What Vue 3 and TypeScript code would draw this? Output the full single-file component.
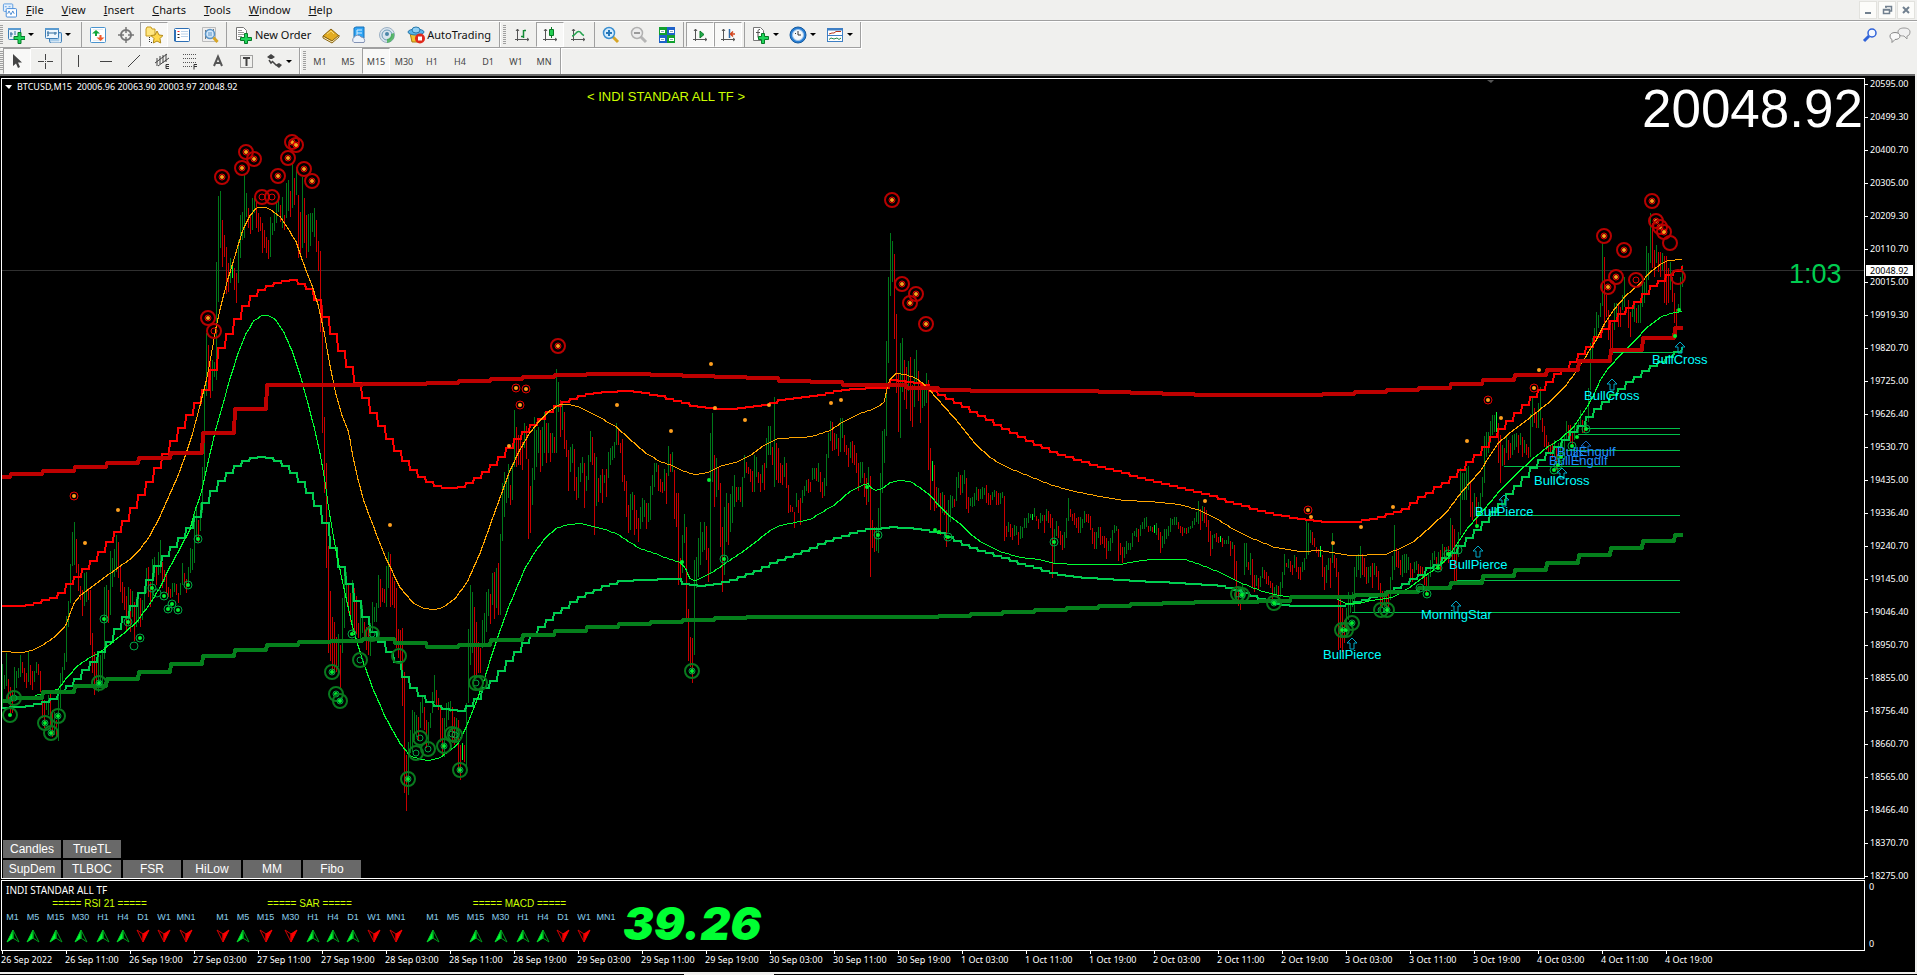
<script setup lang="ts">
type Pt = [number, number]

interface Tool {
  icon: string
  name: string
  text?: string
  caret?: boolean
  active?: boolean
}

const menus = ['File', 'View', 'Insert', 'Charts', 'Tools', 'Window', 'Help']

const standardTools: Tool[][] = [
  [
    { icon: 'new-chart', name: 'New chart', caret: true },
    { icon: 'profiles', name: 'Profiles', caret: true },
  ],
  [
    { icon: 'market', name: 'Market watch' },
    { icon: 'data', name: 'Data window' },
    { icon: 'navigator', name: 'Navigator', active: true },
    { icon: 'terminal', name: 'Terminal' },
    { icon: 'tester', name: 'Strategy tester' },
  ],
  [
    { icon: 'order', name: 'New Order', text: 'New Order' },
    { icon: 'editor', name: 'Editor' },
    { icon: 'cloud', name: 'Hosting' },
    { icon: 'signal', name: 'Signals' },
    { icon: 'auto', name: 'AutoTrading', text: 'AutoTrading' },
  ],
]

const chartTools: Tool[][] = [
  [
    { icon: 'bars', name: 'Bar chart' },
    { icon: 'candles', name: 'Candlesticks', active: true },
    { icon: 'line', name: 'Line chart' },
  ],
  [
    { icon: 'zoom-in', name: 'Zoom in' },
    { icon: 'zoom-out', name: 'Zoom out' },
    { icon: 'tile', name: 'Tile windows' },
  ],
  [
    { icon: 'scroll', name: 'Auto scroll', active: true },
    { icon: 'shift', name: 'Chart shift', active: true },
  ],
  [
    { icon: 'indicators', name: 'Indicators', caret: true },
    { icon: 'clock', name: 'Periods', caret: true },
    { icon: 'template', name: 'Templates', caret: true },
  ],
]

const drawTools: Tool[][] = [
  [
    { icon: 'cursor', name: 'Cursor', active: true },
    { icon: 'cross', name: 'Crosshair' },
  ],
  [
    { icon: 'vline', name: 'Vertical line' },
    { icon: 'hline', name: 'Horizontal line' },
    { icon: 'trend', name: 'Trendline' },
    { icon: 'channel', name: 'Channel' },
    { icon: 'fibo', name: 'Fibonacci' },
    { icon: 'text', name: 'Text' },
    { icon: 'label', name: 'Label' },
    { icon: 'arrows', name: 'Arrows', caret: true },
  ],
]

const periods = ['M1', 'M5', 'M15', 'M30', 'H1', 'H4', 'D1', 'W1', 'MN']

const prices = [
  '20595.00', '20499.30', '20400.70', '20305.00', '20209.30', '20110.70', '20015.00', '19919.30', '19820.70',
  '19725.00', '19626.40', '19530.70', '19435.00', '19336.40', '19240.70', '19145.00', '19046.40', '18950.70',
  '18855.00', '18756.40', '18660.70', '18565.00', '18466.40', '18370.70', '18275.00',
]

const times = Array.from({ length: 27 }, (_, i) => {
  if (i === 0) return '26 Sep 2022'
  const day = 26 + Math.floor(i / 3)
  const hour = ['03:00', '11:00', '19:00'][i % 3]
  return day > 30 ? `${day - 30} Oct ${hour}` : `${day} Sep ${hour}`
})

const quote = 'BTCUSD,M15\u00a0 20006.96 20063.90 20003.97 20048.92'

const switches = [
  ['Candles', 'TrueTL'],
  ['SupDem', 'TLBOC', 'FSR', 'HiLow', 'MM', 'Fibo'],
]

const frames = ['M1', 'M5', 'M15', 'M30', 'H1', 'H4', 'D1', 'W1', 'MN1']
const panels = [
  { name: 'RSI 21', dirs: 'uuuuuuddd' },
  { name: 'SAR', dirs: 'dudduuudd' },
  { name: 'MACD', dirs: 'u-uuuudd-' },
]

/* High-low range of every bar, two pixels apart, in window coordinates */
const barRows: [number, string][] = [
  [2, '664-707 675-689 653-686 679-703 687-713 690-713 667-695 671-688 668-678 655-677 662-673 668-682 673-688 652-682 665-685 671-690 671-682 662-673 664-675 671-692'],
  [42, '692-718 700-728 702-710 695-715 692-730 710-737 712-735 720-738 690-741 673-708 667-683 653-670 616-662 601-627 564-603 532-566 522-565 539-573 564-591 586-600'],
  [82, '590-616 573-606 572-602 588-600 590-645 633-673 652-695 660-690 657-692 655-687 651-688 587-659 585-622 590-623 551-615 558-587 549-577 535-572 542-578 566-592'],
  [122, '582-603 587-610 596-632 587-625 589-632 591-617 602-641 597-627 595-623 598-627 600-620 592-610 568-593 567-597 582-607 559-602 557-577 567-585 552-575 540-573'],
  [162, '562-588 570-582 573-593 587-597 589-598 583-597 583-592 584-595 593-603 583-595 563-585 573-585 579-593 567-586 548-573 549-570 514-563 508-539 520-542 503-531'],
  [202, '467-513 388-480 333-396 345-388 358-398 360-391 362-377 262-380 196-302 191-248 220-267 235-257 247-294 263-292 258-283 263-278 268-290 273-303 240-283 215-258'],
  [242, '212-240 175-238 193-217 208-228 215-234 198-230 198-213 202-228 213-232 217-231 223-253 230-248 237-253 240-259 217-257 223-235 212-231 202-223 199-212 205-222'],
  [282, '197-228 215-230 183-218 180-211 191-217 163-208 178-205 167-195 195-258 212-255 177-248 198-243 215-258 214-252 213-246 213-232 208-237 220-252 241-271 251-332'],
  [322, '305-433 417-493 463-568 546-653 591-661 617-672 622-673 637-672 634-667 645-690 598-653 567-628 572-603 585-613 593-622 580-633 588-633 596-634 623-638 607-642'],
  [362, '605-633 622-640 627-650 626-655 623-656 602-633 607-622 603-622 575-608 579-607 588-602 589-603 566-607 552-588 554-607 577-605 581-608 588-648 629-658 630-668'],
  [402, '628-706 672-793 755-811 742-795 730-753 710-752 712-740 715-737 717-740 702-728 695-713 707-730 720-748 722-745 713-728 692-713 675-703 690-707 698-710 705-742'],
  [442, '718-757 718-757 703-727 702-720 701-712 707-743 717-745 718-743 720-772 745-780 743-760 745-762 703-772 629-703 585-665 592-653 607-678 622-677 642-673 648-673'],
  [482, '620-648 613-645 592-632 589-616 594-624 573-605 572-619 568-608 563-615 534-615 483-541 472-517 479-503 464-498 485-505 463-500 410-467 427-467 435-465 437-465'],
  [522, '442-470 423-448 426-459 459-539 486-533 468-505 417-480 430-467 427-453 430-472 427-466 412-453 423-463 423-453 433-462 433-453 437-453 369-453 382-412 400-437'],
  [562, '402-430 412-449 440-457 450-491 447-472 444-463 449-491 477-500 467-498 463-482 457-473 463-508 476-491 455-480 431-462 437-465 453-535 457-506 478-502 475-493'],
  [602, '469-503 475-483 469-497 452-478 448-465 446-460 442-458 423-445 430-445 443-453 439-482 475-491 481-517 505-533 494-530 492-510 495-535 510-529 518-542 507-529'],
  [642, '498-522 500-517 503-529 503-522 486-520 475-495 463-487 463-472 465-491 479-492 482-493 469-491 473-504 446-476 454-472 452-472 470-519 493-527 493-585 558-578'],
  [682, '535-573 514-543 527-618 609-661 637-667 638-683 560-655 557-588 538-577 522-565 532-552 522-550 526-560 548-582 433-573 413-482 455-507 458-497 467-490 483-547'],
  [722, '527-592 507-575 493-542 503-545 494-532 486-523 475-507 487-502 487-500 487-502 477-507 455-478 462-473 467-474 469-482 471-492 455-492 457-477 472-483 474-492'],
  [762, '465-483 463-490 438-468 426-455 426-455 447-465 397-487 443-480 448-483 463-483 465-485 457-477 463-488 485-513 505-512 507-512 512-528 493-507 500-513 498-525'],
  [802, '490-503 486-496 480-491 479-493 482-492 468-480 468-479 468-481 463-482 472-492 482-498 478-496 454-486 433-458 421-441 422-451 433-450 434-449 438-456 418-452'],
  [842, '418-438 435-452 445-455 448-467 442-458 441-463 445-465 453-473 463-491 462-483 462-478 473-497 478-505 467-502 476-577 520-548 527-552 527-551 508-553 473-528'],
  [882, '431-493 429-463 341-436 277-363 233-296 241-282 254-339 314-393 373-432 343-438 338-392 360-400 367-409 361-391 357-421 385-427 359-407 350-382 371-401 383-423'],
  [922, '387-408 385-406 373-403 380-470 448-510 461-481 465-511 487-508 488-507 493-535 492-513 495-515 510-547 500-532 495-522 496-508 499-507 477-501 472-488 475-495'],
  [962, '475-493 470-484 478-509 497-513 498-506 497-507 493-506 487-500 489-501 489-499 487-499 488-495 485-503 493-505 495-505 492-500 490-497 491-505 493-505 493-504'],
  [1002, '492-498 496-541 526-537 522-532 524-537 528-540 525-536 526-535 532-545 526-539 527-538 518-528 518-528 513-523 514-518 514-520 508-517 516-521 519-529 513-523'],
  [1042, '515-521 515-533 509-521 511-523 514-528 518-578 529-563 521-536 526-538 531-545 535-550 532-548 518-538 498-521 509-517 514-521 513-525 518-528 517-533 517-533'],
  [1082, '519-528 511-523 514-522 514-523 516-530 528-544 532-549 532-549 527-538 527-545 536-544 536-548 538-559 541-551 538-551 530-543 525-533 526-531 529-561 543-555'],
  [1122, '547-563 547-558 541-554 543-550 543-550 533-547 531-536 528-537 529-542 525-536 522-529 518-529 517-527 526-532 526-531 527-532 525-533 523-535 528-540 532-553'],
  [1162, '536-548 529-544 529-539 526-536 518-532 519-525 517-525 517-525 522-529 526-533 527-536 528-533 528-534 527-533 526-529 521-528 518-525 512-522 501-524 509-530'],
  [1202, '506-521 507-523 510-527 520-542 531-556 535-549 534-538 533-542 537-543 536-542 538-547 540-544 540-544 536-544 541-556 542-549 545-580 561-604 590-606 602-610'],
  [1242, '584-603 543-575 543-567 562-570 553-575 559-587 575-592 575-586 578-590 576-587 567-578 570-579 572-584 576-585 581-588 583-603 587-597 585-595 586-597 582-597'],
  [1282, '572-588 554-575 563-567 559-568 561-572 565-575 555-568 557-572 567-579 567-580 562-572 558-570 521-559 523-555 530-543 532-545 538-547 547-553 549-557 546-557'],
  [1322, '555-577 567-590 565-583 558-570 558-588 533-563 555-568 558-577 572-650 597-648 608-652 620-643 608-637 592-620 595-613 592-607 567-613 555-577 554-570 546-578'],
  [1362, '554-575 558-577 567-584 567-583 566-577 563-588 563-575 566-577 571-590 583-607 591-607 591-607 592-610 593-613 577-600 556-580 525-570 548-567 551-568 560-575'],
  [1402, '555-577 554-573 554-573 557-570 563-578 569-582 562-573 561-570 564-575 566-575 567-577 575-585 577-593 573-588 560-577 553-567 551-560 557-568 552-567 550-570'],
  [1442, '544-563 547-563 547-557 546-563 518-557 525-560 529-585 548-583 532-557 468-535 473-500 473-500 468-500 466-490 483-517 502-520 493-517 497-528 502-515 493-513'],
  [1482, '477-497 436-483 432-457 432-453 421-443 415-435 415-432 412-432 423-463 435-483 445-466 448-465 437-453 440-460 443-458 435-455 434-450 433-447 435-453 433-445'],
  [1522, '437-457 440-453 444-455 447-458 414-457 397-427 408-423 413-428 403-428 387-420 418-432 426-447 435-450 442-452 445-455 443-458 440-457 447-470 443-463 442-458'],
  [1562, '440-457 435-453 421-440 425-438 425-443 432-447 423-440 425-433 422-433 410-427 420-433 422-433 422-428 388-422 343-390 338-362 328-343 312-337 315-328 303-317'],
  [1602, '243-306 257-327 295-317 310-340 323-350 323-352 303-330 303-317 305-327 307-327 295-310 277-307 307-313 300-328 312-337 308-317 303-322 308-323 305-323 298-323'],
  [1642, '283-307 282-303 246-295 253-280 213-263 223-268 250-277 245-263 252-272 252-277 253-270 256-303 256-305 268-303 262-290 277-302 293-323 309-337 304-313 277-310'],
  [1682, '265-287'],
]

const freshBars = [232, 462, 932, 1032, 1154, 1220, 1320, 1496]

const bars = barRows.flatMap(([start, row]) =>
  row.split(' ').map((pair, i) => {
    const [hi, lo] = pair.split('-').map(Number)
    return { x: start + i * 2, hi, lo }
  }),
)

const barPaths = { up: '', down: '', fresh: '' }
bars.forEach((bar, i) => {
  const prev = bars[Math.max(0, i - 1)]
  const falling = bar.hi + bar.lo > prev.hi + prev.lo
  const kind = freshBars.includes(bar.x) ? 'fresh' : falling ? 'down' : 'up'
  barPaths[kind] += `M${bar.x + 0.5} ${bar.hi}V${bar.lo}`
})

function parse(list: string): Pt[] {
  return list.split(' ').map((pair) => pair.split(',').map(Number) as Pt)
}

function valueAt(points: Pt[], x: number): number {
  if (x <= points[0][0]) return points[0][1]
  for (let i = 1; i < points.length; i++) {
    const [x1, y1] = points[i]
    if (x <= x1) {
      const [x0, y0] = points[i - 1]
      return y0 + ((y1 - y0) * (x - x0)) / (x1 - x0)
    }
  }
  return points[points.length - 1][1]
}

const lastBar = 1683

/* Levels of a higher period drawn as stairs that are `width` pixels wide */
function stairs(list: string, width: number, first: number): string {
  const points = parse(list)
  let y = Math.round(valueAt(points, first - width))
  let d = `M2 ${y}`
  for (let x = first; x < lastBar; x += width) {
    const next = Math.round(valueAt(points, x))
    d += `H${x}L${x + 1} ${next}`
    y = next
  }
  return `${d}H${lastBar}`
}

/* Curve that moves in one-bar steps */
function curve(list: string): string {
  const points = parse(list)
  let d = ''
  for (let x = 2; x < lastBar; x += 2) {
    d += `${d ? 'L' : 'M'}${x} ${Math.round(valueAt(points, x)) + 0.5}`
  }
  return d
}

const upperH4 = stairs(
  '-22,477 10,474 42,471 74,467 106,463 138,458 170,453 202,433 234,409 266,385 394,384 426,383 458,381 490,379 522,377 554,375 586,374 618,374 650,375 682,376 714,377 746,378 778,381 810,382 842,385 874,385 906,388 938,390 970,391 1066,391 1098,392 1130,393 1162,394 1194,395 1290,395 1322,394 1354,392 1386,390 1418,388 1450,384 1482,380 1514,375 1546,370 1578,361 1610,350 1642,338 1674,328',
  32, 10,
)
const lowerH4 = stairs(
  '-22,701 10,698 42,692 74,686 106,679 138,672 170,664 202,656 234,650 266,645 298,642 330,641 362,639 394,643 426,647 458,645 490,640 522,635 554,631 586,627 618,624 650,622 682,620 714,618 746,617 906,617 938,616 970,614 1002,612 1034,610 1066,608 1098,606 1130,604 1194,602 1258,601 1290,597 1322,597 1354,595 1386,592 1418,588 1450,583 1482,576 1514,570 1546,563 1578,555 1610,548 1642,541 1674,535',
  32, 10,
)
const upperH1 = stairs(
  '1,606 17,606 25,605 33,603 41,600 49,598 57,593 65,584 73,577 81,569 89,561 97,552 105,542 113,532 121,521 129,508 137,495 145,482 153,468 161,454 169,441 177,428 185,415 193,403 201,390 209,370 217,348 225,334 233,319 241,306 249,296 257,290 265,286 273,283 281,281 289,280 297,284 305,289 313,300 321,317 329,334 337,351 345,367 353,383 361,398 369,413 377,426 385,439 393,451 401,461 409,470 417,477 425,482 433,486 441,488 449,488 457,487 465,483 473,478 481,472 489,465 497,457 505,448 513,439 521,432 529,425 537,419 545,412 553,406 561,402 569,399 577,396 585,394 601,392 617,391 625,391 641,393 657,396 665,399 673,401 681,403 689,406 705,408 713,409 729,409 745,407 753,406 769,403 777,400 793,398 809,396 825,393 833,391 849,389 873,388 881,388 889,380 905,382 913,383 921,385 929,391 937,395 961,407 969,412 985,420 993,425 1025,441 1049,452 1073,460 1105,469 1145,480 1193,492 1209,496 1225,502 1265,513 1289,518 1305,520 1321,522 1353,522 1361,520 1377,517 1385,514 1401,509 1417,497 1425,493 1433,487 1441,483 1449,477 1457,470 1465,462 1473,455 1481,447 1489,437 1497,429 1505,421 1513,413 1521,405 1529,397 1537,390 1545,382 1553,374 1561,369 1569,362 1577,354 1585,347 1593,337 1601,329 1609,321 1617,314 1625,308 1633,302 1641,294 1649,286 1657,281 1665,275 1673,271 1681,267',
  8, 9,
)
const lowerH1 = stairs(
  '1,708 25,706 41,702 49,699 57,693 65,686 73,679 81,670 89,662 97,652 105,642 113,629 121,617 129,606 137,593 145,580 153,566 161,556 169,547 177,538 185,528 193,517 201,503 209,491 217,481 225,473 233,466 241,461 249,458 257,457 265,458 273,461 281,466 289,473 297,482 305,493 313,506 321,523 329,548 337,567 345,584 353,601 361,617 369,632 377,642 385,652 393,662 401,677 409,688 417,696 425,702 433,706 441,709 449,710 457,711 465,706 473,699 481,688 489,681 497,671 505,661 513,652 521,643 529,635 537,627 545,620 553,613 561,608 569,602 577,597 585,593 601,586 617,581 633,580 673,579 681,584 689,585 697,586 705,585 721,582 737,577 753,571 769,563 785,557 801,551 817,544 833,538 849,533 865,529 881,528 889,527 905,528 921,530 937,533 953,541 969,548 985,553 1001,558 1017,564 1033,568 1049,573 1065,576 1097,579 1153,582 1193,584 1217,586 1233,590 1249,596 1273,604 1289,606 1337,606 1353,602 1369,597 1385,592 1393,588 1401,584 1409,579 1417,575 1425,568 1433,565 1441,558 1449,553 1457,546 1465,538 1473,530 1481,522 1489,512 1497,504 1505,494 1513,486 1521,477 1529,468 1537,460 1545,453 1553,447 1561,440 1569,432 1577,426 1585,417 1593,409 1601,402 1609,395 1617,389 1625,382 1633,377 1641,371 1649,366 1657,362 1665,357 1673,352 1681,348',
  8, 9,
)
const upperM15 = curve(
  '2,651 22,652 35,649 45,643 55,636 62,629 66,624 70,613 74,603 80,595 88,589 100,580 110,573 118,567 130,559 140,549 150,535 160,516 170,493 177,478 184,459 192,435 200,405 207,377 212,350 216,327 221,305 228,278 236,252 243,229 250,215 257,207 265,207 272,210 280,216 288,228 296,241 300,253 306,270 312,285 318,304 324,331 330,365 336,394 342,415 349,433 353,457 358,479 364,501 375,530 387,560 400,587 413,602 425,608 434,609 443,607 455,598 467,582 480,553 490,525 500,497 510,470 520,449 530,432 540,420 550,410 560,404 570,404 580,407 590,412 605,420 617,427 630,439 645,452 660,461 672,465 680,469 690,473 697,474 708,472 720,466 735,462 750,455 765,444 778,438 800,437 812,436 830,430 845,420 860,413 875,408 884,402 889,380 896,373 905,374 915,377 924,384 930,390 945,407 960,424 975,443 990,457 1005,466 1020,472 1050,484 1070,490 1100,496 1125,500 1150,501 1180,504 1200,510 1215,517 1235,530 1255,539 1275,547 1300,551 1320,550 1350,555 1385,554 1400,548 1415,540 1430,527 1447,511 1462,491 1480,471 1490,455 1497,444 1510,432 1530,417 1550,401 1565,386 1577,370 1587,354 1597,338 1605,322 1615,308 1625,296 1640,283 1650,272 1660,264 1668,260 1682,259',
)
const lowerM15 = curve(
  '2,701 30,697 45,692 58,689 66,678 78,665 90,657 100,652 112,642 125,632 137,621 148,606 160,587 168,570 180,548 190,529 195,510 201,493 204,480 209,457 215,432 222,407 230,378 238,353 246,333 254,320 262,315 268,315 275,319 284,332 292,350 300,374 309,407 315,430 321,458 325,481 329,510 336,550 345,593 353,628 362,658 372,686 385,716 400,743 410,755 420,759 430,760 440,757 450,750 458,743 466,727 475,705 483,683 492,654 500,630 508,608 516,589 525,568 535,551 545,538 556,528 568,524 580,523 590,525 605,529 618,534 630,542 640,548 655,553 665,557 680,562 685,567 690,578 695,580 705,575 715,570 725,563 740,553 755,542 770,530 780,525 795,522 810,519 820,513 835,504 850,491 862,485 868,483 872,488 876,490 882,488 890,482 900,480 910,481 920,487 930,495 940,506 948,514 960,523 970,533 980,541 1000,551 1020,557 1040,559 1055,563 1080,564 1120,564 1135,561 1150,559 1185,559 1200,564 1215,570 1230,577 1240,582 1260,590 1278,595 1300,597 1337,598 1345,603 1360,603 1370,600 1387,598 1397,595 1410,587 1423,577 1437,567 1447,558 1457,543 1467,528 1477,517 1485,508 1500,490 1517,473 1533,458 1547,447 1560,439 1573,427 1583,413 1592,398 1600,380 1608,368 1620,355 1633,342 1647,327 1660,317 1670,313 1681,311',
)

/* Ring markers: b = outer ring, s = inner ring, d = dot */
type Mark = { x: number; y: number; kind: string }
function marks(list: string): Mark[] {
  return list.split(' ').map((item) => {
    const [x, y, kind] = item.split(',')
    return { x: Number(x), y: Number(y), kind }
  })
}
const highs = marks(
  '222,177,bsd 242,168,bsd 246,152,bsd 254,159,bsd 262,197,bs 272,197,bs 278,176,bsd 288,158,bsd 292,142,bsd 296,145,bsd 304,169,bsd 312,181,bsd 208,318,bsd 214,331,bs 558,346,bsd 74,496,sd 516,388,sd 526,389,sd 520,405,sd 118,510,d 85,543,d 390,525,d 509,446,d 617,405,d 711,364,d 715,408,d 671,431,d 745,420,d 769,405,d 831,403,d 841,400,d 892,200,bsd 902,284,bsd 916,294,bsd 910,303,bsd 926,324,bsd 1308,510,sd 1205,501,d 1311,517,d 1333,543,d 1361,527,d 1393,507,d 1604,236,bsd 1624,250,bsd 1616,277,bsd 1608,287,bsd 1636,280,bs 1652,201,bsd 1656,221,bsd 1660,227,bsd 1664,232,bsd 1670,243,b 1678,277,b 1488,400,sd 1534,388,sd 1467,441,d 1501,418,d 1539,370,d',
)
const lows = marks(
  '10,715,bd 14,698,bs 45,723,bsd 51,733,bsd 58,716,bsd 99,683,bsd 104,619,sd 128,622,sd 140,638,sd 152,588,sd 164,596,sd 168,609,sd 172,604,sd 178,610,sd 188,585,sd 198,539,sd 134,646,s 157,593,s 352,634,sd 332,672,bsd 336,694,bsd 340,701,bsd 360,660,bs 372,634,bs 399,656,b 408,779,bsd 416,753,bs 420,738,bs 428,749,bs 444,746,bsd 452,734,bs 455,735,bs 460,770,bsd 476,683,bs 480,683,b 692,671,bsd 724,559,sd 878,535,sd 948,537,sd 709,480,d 867,487,d 935,530,d 939,532,d 682,562,d 1054,542,sd 1238,594,bs 1242,595,bsd 1274,603,bsd 1342,630,bsd 1346,630,bd 1352,623,bsd 1381,610,bs 1387,610,bsd 1420,588,s 1427,594,sd 1438,568,sd 1448,554,sd 1458,550,s 1477,526,d 1479,514,d 1586,429,sd 1572,446,sd 1554,470,sd 1561,457,sd 1558,465,sd 1577,437,d 1679,310,d 1675,336,d',
)

const levels: Pt[] = [
  [1612, 352], [1586, 428], [1578, 434], [1566, 450], [1504, 466], [1480, 515], [1457, 580], [1352, 612],
]

const patterns = [
  { text: 'BullPierce', x: 1323, y: 659, ax: 1352, ay: 638 },
  { text: 'MorningStar', x: 1421, y: 619, ax: 1456, ay: 601 },
  { text: 'BullPierce', x: 1449, y: 569, ax: 1478, ay: 546 },
  { text: 'BullPierce', x: 1475, y: 516, ax: 1504, ay: 495 },
  { text: 'BullCross', x: 1534, y: 485, ax: 1562, ay: 468 },
  { text: 'BullEngulf', x: 1549, y: 465, ax: 1578, ay: 450, blue: true },
  { text: 'BullEngulf', x: 1557, y: 456, ax: 1586, ay: 441, blue: true },
  { text: 'BullCross', x: 1584, y: 400, ax: 1612, ay: 379 },
  { text: 'BullCross', x: 1652, y: 364, ax: 1680, ay: 342 },
]
</script>

<template>
  <svg class="sprite" aria-hidden="true">
    <symbol id="i-app" viewBox="0 0 16 16">
      <rect x="1.500" y="1.500" width="10" height="8" rx="1" fill="#e4f0fc" stroke="#5b9be0" />
      <path d="M3 4.500h2M7 4.500h2" stroke="#5b9be0" />
      <rect x="4.500" y="6.500" width="11" height="9" rx="1" fill="#fff" stroke="#3f86d8" />
      <path d="M6 12l1.500-3 2 4 2-4 1.500 3" fill="none" stroke="#4a8ad0" />
    </symbol>
    <symbol id="i-new-chart" viewBox="0 0 18 18">
      <rect x="1.500" y="2.500" width="12" height="11" rx="1" fill="#eaf3fb" stroke="#3e7fb8" />
      <path d="M1 3h13" stroke="#5b9bd0" stroke-width="2" /><path d="M4 6v5M3 8h3M8 5v4" stroke="#2f6d9e" />
      <path d="M11 6.500h3v4h4v3h-4v4h-3v-4H7v-3h4z" fill="#1fd45a" stroke="#077a28" />
    </symbol>
    <symbol id="i-profiles" viewBox="0 0 18 18">
      <rect x="5.500" y="6.500" width="12" height="10" rx="1" fill="#a9cdea" stroke="#3e7fb8" />
      <path d="M16 8v8H7" stroke="#fff" fill="none" />
      <rect x="1.500" y="2.500" width="13" height="10" rx="1" fill="#eef6fd" stroke="#3e7fb8" />
      <path d="M1 3h14" stroke="#5b9bd0" stroke-width="2" /><path d="M4 5v4M3 7h10M11 6v3M5 9l-2 1" stroke="#2f6d9e" fill="none" />
    </symbol>
    <symbol id="i-market" viewBox="0 0 18 18">
      <rect x="1.500" y="1.500" width="15" height="15" rx="1" fill="#fff" stroke="#4a94cf" />
      <path d="M4 3.500h10M4 14.500h10" stroke="#e4ecf2" />
      <path d="M7 4l4 3.500H8V10H6V7.500H3z" fill="#12a83c" /><path d="M11.500 15l4-3.500h-3V9h-2v2.500h-3z" fill="#f0592b" />
    </symbol>
    <symbol id="i-data" viewBox="0 0 18 18">
      <circle cx="9" cy="9" r="5" fill="none" stroke="#777" stroke-width="2" />
      <path d="M9 1v6M9 11v6M1 9h6M11 9h6" stroke="#777" stroke-width="1.500" />
    </symbol>
    <symbol id="i-navigator" viewBox="0 0 18 18">
      <path d="M1 3l1-2h4l1 2h3v7H1z" fill="#ffe680" stroke="#c79a1c" />
      <path d="M4.500 11v6M6 16.500h4" stroke="#333" stroke-dasharray="1 1" />
      <path d="M12 5l2 4 4 .5-3 3 .7 4.500-3.700-2-3.700 2 .7-4.500-3-3 4-.5z" fill="#ffd84a" stroke="#b28a18" />
    </symbol>
    <symbol id="i-terminal" viewBox="0 0 18 18">
      <rect x="1.500" y="2.500" width="15" height="13" rx="1" fill="#fff" stroke="#2d6fb5" />
      <path d="M1 4h2v11H1z" fill="#2d6fb5" /><path d="M8 5.500h7M8 8h7M8 10.500h7" stroke="#bcd3ea" />
      <path d="M5.500 5v1" stroke="#f22" stroke-width="2" /><path d="M5.500 8v1M5.500 11v1" stroke="#222" stroke-width="2" />
    </symbol>
    <symbol id="i-tester" viewBox="0 0 18 18">
      <path d="M1.500 1.500h13v14h-13z" fill="#eee" stroke="#bbb" /><path d="M4.500 4v9M4 11h8M12.500 3v5" stroke="#777" />
      <circle cx="9" cy="8" r="4.500" fill="#cfe6fb" fill-opacity=".85" stroke="#5a94c6" stroke-width="1.500" />
      <path d="M12.500 11.500l4 4.500" stroke="#d7a526" stroke-width="3" /><path d="M8 6v4M10 6v4" stroke="#5a94c6" />
    </symbol>
    <symbol id="i-order" viewBox="0 0 18 18">
      <path d="M1.500 1.500h7l3 3v9h-10z" fill="#fff" stroke="#777" /><path d="M3 4.500h4M3 6.500h6M3 8.500h6M3 10.500h4" stroke="#999" />
      <path d="M9.500 7.500h3v4h4v3h-4v3h-3v-3h-4v-3h4z" fill="#1fd45a" stroke="#077a28" />
    </symbol>
    <symbol id="i-editor" viewBox="0 0 18 18">
      <path d="M1 10l8-7 8 7-7 5z" fill="#e3ac22" stroke="#8a6410" />
      <path d="M1 10v2l9 5 7-6V9l-7 6z" fill="#fff2c0" stroke="#8a6410" />
      <path d="M5 8l4-3 3 3" stroke="#f7dc7a" fill="none" />
    </symbol>
    <symbol id="i-cloud" viewBox="0 0 18 18">
      <path d="M4 2l2-1h8v11H4z" fill="#2fa4f4" stroke="#1670b8" /><path d="M7 4h5M7 7h5M7 4v6" stroke="#d7efff" />
      <path d="M4 16.500a3 3 0 0 1 0-5 4 4 0 0 1 7-.5 3.500 3.500 0 0 1 3 5.500z" fill="#edf2fa" stroke="#8393b5" />
    </symbol>
    <symbol id="i-signal" viewBox="0 0 18 18">
      <circle cx="9" cy="9" r="7.500" fill="#d9e4ee" stroke="#9bb0c4" /><circle cx="9" cy="9" r="5" fill="none" stroke="#6c9cb8" />
      <circle cx="9" cy="8" r="2" fill="#4a86a8" /><path d="M9 17a8 8 0 0 0 7-10l-3 1a4.500 4.500 0 0 1-4 5z" fill="#3fae4e" fill-opacity=".8" />
    </symbol>
    <symbol id="i-auto" viewBox="0 0 18 18">
      <path d="M3 7l2 9h6l4-9z" fill="#f4c32f" stroke="#a97a12" /><ellipse cx="9" cy="6" rx="8" ry="3" fill="#59b4ea" stroke="#2878ab" />
      <ellipse cx="9" cy="4" rx="4" ry="3" fill="#8fd0f5" stroke="#2878ab" />
      <circle cx="13" cy="12.500" r="5" fill="#e02a1d" /><path d="M11 10.500h4v4h-4z" fill="#fff" />
    </symbol>
    <symbol id="i-bars" viewBox="0 0 18 18">
      <path d="M4.500 3v12M2 13.500h14M3 5l1.500-2L6 5M14 12l2 1.500-2 1.500" stroke="#555" fill="none" />
      <path d="M10.500 4v8M8 10.500h2M11 4.500h2" stroke="#138a36" stroke-width="1.500" />
    </symbol>
    <symbol id="i-candles" viewBox="0 0 18 18">
      <path d="M4.500 3v12M2 13.500h14M3 5l1.500-2L6 5M14 12l2 1.500-2 1.500" stroke="#555" fill="none" />
      <path d="M10.500 1v11" stroke="#0b7a28" /><path d="M8.500 3.500h4v6h-4z" fill="#23cf52" stroke="#0b7a28" />
    </symbol>
    <symbol id="i-line" viewBox="0 0 18 18">
      <path d="M4.500 3v12M2 13.500h14M3 5l1.500-2L6 5M14 12l2 1.500-2 1.500" stroke="#555" fill="none" />
      <path d="M3 10c3 0 4-5 7-4.500 2 0 2 3 5 4" stroke="#23a24e" fill="none" stroke-width="1.500" />
    </symbol>
    <symbol id="i-zoom-in" viewBox="0 0 18 18">
      <path d="M10 10l6 6" stroke="#d7a526" stroke-width="3" /><circle cx="7" cy="7" r="5.500" fill="#d5edfd" stroke="#3b8fd0" stroke-width="1.500" />
      <path d="M4 7h6M7 4v6" stroke="#2677b8" stroke-width="2" />
    </symbol>
    <symbol id="i-zoom-out" viewBox="0 0 18 18">
      <path d="M10 10l6 6" stroke="#b5b5b5" stroke-width="3" /><circle cx="7" cy="7" r="5.500" fill="#ececec" stroke="#b0b0b0" stroke-width="1.500" />
      <path d="M4 7h6" stroke="#9a9a9a" stroke-width="2" />
    </symbol>
    <symbol id="i-tile" viewBox="0 0 18 18">
      <path d="M1 1h8v8H1z" fill="#12a02f" /><path d="M9 1h8v8H9z" fill="#1e62c9" /><path d="M1 9h8v8H1z" fill="#1e62c9" /><path d="M9 9h8v8H9z" fill="#12a02f" />
      <path d="M2 4h5v3H2zM11 4h5v3h-5zM2 12h5v3H2zM11 12h5v3h-5z" fill="#fff" />
      <path d="M3 5.500h3M12 5.500h3M3 13.500h3M12 13.500h3" stroke="#8ab" />
    </symbol>
    <symbol id="i-scroll" viewBox="0 0 18 18">
      <path d="M4.500 3v12M2 13.500h14M3 5l1.500-2L6 5M14 12l2 1.500-2 1.500" stroke="#555" fill="none" /><path d="M9 5l4 3.500L9 12z" fill="#1fae4c" stroke="#0b7a28" />
    </symbol>
    <symbol id="i-shift" viewBox="0 0 18 18">
      <path d="M4.500 3v12M2 13.500h14M3 5l1.500-2L6 5M14 12l2 1.500-2 1.500" stroke="#555" fill="none" />
      <path d="M10.500 3v9" stroke="#2b6aa8" stroke-width="1.500" /><path d="M16 8h-4M14 5.500L11.500 8l2.500 2.500" stroke="#d2441c" fill="none" stroke-width="1.500" />
    </symbol>
    <symbol id="i-indicators" viewBox="0 0 18 18">
      <path d="M1.500 1.500h7l3 3v10h-10z" fill="#fff" stroke="#777" /><path d="M8 3.500c-2-.5-2 1-2 3v5M4 6.500h4" stroke="#555" fill="none" />
      <path d="M9.500 7.500h3v3h4v3h-4v4h-3v-4h-3v-3h3z" fill="#1fd45a" stroke="#077a28" />
    </symbol>
    <symbol id="i-clock" viewBox="0 0 18 18">
      <circle cx="9" cy="9" r="8" fill="#2a7fd4" stroke="#155a9e" /><circle cx="9" cy="9" r="5.500" fill="#f4f8fb" stroke="#9cc4ea" />
      <path d="M9 5v4h3M6 7l1 1" stroke="#333" fill="none" />
    </symbol>
    <symbol id="i-template" viewBox="0 0 18 18">
      <rect x="1.500" y="2.500" width="15" height="13" fill="#fff" stroke="#3e7fc4" /><path d="M1 3.500h16" stroke="#3e7fc4" stroke-width="2" /><path d="M2 9.500h14" stroke="#3e7fc4" />
      <path d="M3 8l3-1 2 0 2-1.500h5" stroke="#b5361c" fill="none" /><path d="M3 13.500l2-1.500 3 1 3-1 2 1.500 2-1.500" stroke="#23864a" fill="none" />
    </symbol>
    <symbol id="i-cursor" viewBox="0 0 18 18">
      <path d="M5 2v12l3-2.500 2 4.500 2-1-2-4.500h4z" fill="#444" />
    </symbol>
    <symbol id="i-cross" viewBox="0 0 18 18">
      <path d="M9.500 2v6M9.500 11v6M2 9.500h6M11 9.500h6M9 9.500h1" stroke="#444" />
    </symbol>
    <symbol id="i-vline" viewBox="0 0 18 18"><path d="M9.500 3v12" stroke="#444" /></symbol>
    <symbol id="i-hline" viewBox="0 0 18 18"><path d="M3 9.500h12" stroke="#444" /></symbol>
    <symbol id="i-trend" viewBox="0 0 18 18"><path d="M3 15L15 3" stroke="#444" /></symbol>
    <symbol id="i-channel" viewBox="0 0 18 18">
      <path d="M2 11L14 2M5 14L16 6M4 6v8M7 4v8M10 3v8M13 2v8" stroke="#444" /><path d="M16 12.500h-3v4h3M13 14.500h3" stroke="#333" fill="none" />
    </symbol>
    <symbol id="i-fibo" viewBox="0 0 18 18">
      <path d="M2 2.500h13M2 6.500h13M2 10.500h13M2 14.500h9" stroke="#555" stroke-dasharray="1 1" /><path d="M16 12.500h-3v5M13 14.500h3" stroke="#333" fill="none" />
    </symbol>
    <symbol id="i-text" viewBox="0 0 18 18"><path d="M5 14L9 4.500 13 14M6.500 11h5" stroke="#555" stroke-width="2" fill="none" /></symbol>
    <symbol id="i-label" viewBox="0 0 18 18">
      <path d="M3.500 3.500h12v12h-12z" fill="none" stroke="#555" stroke-dasharray="1 1" /><path d="M6 6h7M9.500 6v8" stroke="#444" stroke-width="2" />
    </symbol>
    <symbol id="i-arrows" viewBox="0 0 18 18">
      <path d="M2 5l4-3 4 3-3 2H5zM10 13l4-2 3 2-3 3z" fill="#444" /><path d="M4 8l2 3 2-2M8 10l3 3" stroke="#444" fill="none" stroke-width="1.500" />
    </symbol>
    <symbol id="i-search" viewBox="0 0 18 18">
      <path d="M3 15l5-5" stroke="#2f62d8" stroke-width="3" /><circle cx="11" cy="7" r="4" fill="#f4f8ff" stroke="#2f62d8" stroke-width="1.500" />
    </symbol>
    <symbol id="i-chat" viewBox="0 0 22 18">
      <path d="M9 6c0-3 3-4 6-4s6 1 6 4-2 4-3 4v3l-3-3c-4 0-6-1-6-4z" fill="#f0f0f0" stroke="#999" />
      <path d="M1 10c0-2 2-3.500 5-3.500s5 1.500 5 3.500-2 3.500-5 3.500l-3 3v-3c-1-.5-2-1.500-2-3.500z" fill="#fafafa" stroke="#888" />
    </symbol>
    <symbol id="i-min" viewBox="0 0 16 16"><path d="M5 11h6" stroke="#71808f" stroke-width="2" /></symbol>
    <symbol id="i-restore" viewBox="0 0 16 16">
      <path d="M7 6V4.500h5.500V9H11M6 4.500h7" stroke="#71808f" fill="none" stroke-width="1.500" /><path d="M4.500 7.500h6v4h-6zM4 8h7" stroke="#71808f" fill="none" stroke-width="1.500" />
    </symbol>
    <symbol id="i-close" viewBox="0 0 16 16"><path d="M5 5l6 6M11 5l-6 6" stroke="#71808f" stroke-width="2" /></symbol>
    <symbol id="i-up" viewBox="0 0 14 14">
      <path d="M7 1v8L1 13z" fill="#00ff33" stroke="#00d42a" /><path d="M7 1l6 12-6-4z" fill="none" stroke="#009a1e" />
    </symbol>
    <symbol id="i-down" viewBox="0 0 14 14">
      <path d="M7 13V5l6-4z" fill="#f00" stroke="#f00" /><path d="M7 13L1 1l6 4z" fill="none" stroke="#d00000" />
    </symbol>
  </svg>

  <div class="terminal">
    <header class="menubar">
      <svg class="app"><use href="#i-app" /></svg>
      <nav class="menus">
        <button v-for="menu in menus" :key="menu" type="button"><u>{{ menu[0] }}</u>{{ menu.slice(1) }}</button>
      </nav>
      <div class="window-buttons">
        <button v-for="name in ['min', 'restore', 'close']" :key="name" type="button" :aria-label="name">
          <svg><use :href="`#i-${name}`" /></svg>
        </button>
      </div>
    </header>

    <div class="toolbar">
      <div v-for="(bar, b) in [standardTools, chartTools]" :key="b" class="strip framed">
        <span class="grip"></span>
        <div v-for="(group, g) in bar" :key="g" class="group">
          <button
            v-for="tool in group"
            :key="tool.icon"
            type="button"
            :aria-label="tool.name"
            :class="['tool', { active: tool.active, wide: tool.caret, labelled: tool.text }]"
          >
            <svg class="icon"><use :href="`#i-${tool.icon}`" /></svg>
            <span v-if="tool.text">{{ tool.text }}</span>
            <i v-if="tool.caret" class="caret"></i>
          </button>
        </div>
      </div>
      <div class="corner">
        <button type="button" aria-label="Search"><svg class="icon"><use href="#i-search" /></svg></button>
        <button type="button" aria-label="Chat"><svg class="icon chat"><use href="#i-chat" /></svg></button>
      </div>
    </div>

    <div class="toolbar second">
      <div class="strip">
        <span class="grip"></span>
        <div v-for="(group, g) in drawTools" :key="g" class="group">
          <button
            v-for="tool in group"
            :key="tool.icon"
            type="button"
            :aria-label="tool.name"
            :class="['tool', { active: tool.active, wide: tool.caret }]"
          >
            <svg class="icon"><use :href="`#i-${tool.icon}`" /></svg>
            <i v-if="tool.caret" class="caret"></i>
          </button>
        </div>
      </div>
      <div class="strip">
        <span class="grip"></span>
        <button
          v-for="period in periods"
          :key="period"
          type="button"
          :class="['tool', 'period', { active: period === 'M15' }]"
        >{{ period }}</button>
      </div>
    </div>

    <main class="chart">
      <section class="pane">
        <svg class="plot">
          <g transform="translate(-2 -79)">
            <path class="bid" d="M0 270.500H4000" />
            <g class="crisp">
              <path class="bar up" :d="barPaths.up" />
              <path class="bar down" :d="barPaths.down" />
              <path class="bar fresh" :d="barPaths.fresh" />
              <path v-for="[x, y] in levels" :key="y" class="level" :d="`M${x} ${y + 0.5}H1680`" />
              <path class="h1 low" :d="lowerH1" />
              <path class="m15 low" :d="lowerM15" />
              <path class="h1 high" :d="upperH1" />
              <path class="m15 high" :d="upperM15" />
              <path class="h4 high" :d="upperH4" />
              <path class="h4 low" :d="lowerH4" />
            </g>
            <g v-for="(set, s) in [highs, lows]" :key="s" :class="s ? 'lows' : 'highs'">
              <g v-for="(m, i) in set" :key="i">
                <circle v-if="m.kind.includes('b')" class="outer" :cx="m.x" :cy="m.y" r="7" />
                <circle v-if="m.kind.includes('s')" class="inner" :cx="m.x" :cy="m.y" :r="m.kind.includes('b') ? 3 : 4" />
                <circle v-if="m.kind.includes('d')" class="dot" :cx="m.x" :cy="m.y" r="2" />
              </g>
            </g>
            <g v-for="(p, i) in patterns" :key="i" :class="['pattern', { blue: p.blue }]">
              <path :d="`M${p.ax} ${p.ay}l5 5h-3v6h-4v-6h-3z`" />
              <text :x="p.x" :y="p.y">{{ p.text }}</text>
            </g>
            <path d="M5 85h7l-3 4z" fill="#fff" />
            <path d="M1487 80h7l-3 3z" fill="#555" />
            <text class="quote" x="17" y="90">{{ quote }}</text>
            <text class="title" x="587" y="101">&lt; INDI STANDAR ALL TF &gt;</text>
            <text class="timer" x="1789" y="283">1:03</text>
          </g>
          <text class="price" x="100%" dx="-1" y="48">20048.92</text>
        </svg>
        <div class="switches">
          <div v-for="(row, r) in switches" :key="r">
            <button v-for="name in row" :key="name" type="button">{{ name }}</button>
          </div>
        </div>
      </section>

      <ol class="scale">
        <li v-for="price in prices" :key="price">{{ price }}</li>
        <li class="current">20048.92</li>
      </ol>

      <section class="pane indicator">
        <h2>INDI STANDAR ALL TF</h2>
        <div class="panels">
          <div v-for="panel in panels" :key="panel.name" class="panel">
            <h3>===== {{ panel.name }} =====</h3>
            <ul>
              <li v-for="(frame, i) in frames" :key="frame">
                <span>{{ frame }}</span>
                <svg v-if="panel.dirs[i] !== '-'"><use :href="panel.dirs[i] === 'u' ? '#i-up' : '#i-down'" /></svg>
              </li>
            </ul>
          </div>
          <output>39.26</output>
        </div>
      </section>
      <div class="subscale"><span>0</span><span>0</span></div>

      <ol class="times">
        <li v-for="time in times" :key="time">{{ time }}</li>
      </ol>
    </main>
    <footer><span></span></footer>
  </div>
</template>

<style>
html,
body {
  margin: 0;
  background: #f0f0ee;
}
</style>

<style scoped>
.sprite {
  position: absolute;
  width: 0;
  height: 0;
}
.terminal {
  display: flex;
  flex-direction: column;
  height: 100vh;
  min-height: 600px;
  overflow: hidden;
  background: #f0f0ee;
  font-family: 'Noto Sans', 'Open Sans', sans-serif;
  font-size: 11px;
  color: #111;
}
button {
  margin: 0;
  padding: 0;
  border: 0;
  background: none;
  font: inherit;
  color: inherit;
}
ol,
ul {
  margin: 0;
  padding: 0;
  list-style: none;
}
.menubar {
  display: flex;
  align-items: center;
  flex: none;
  height: 20px;
  padding: 0 2px;
  border-bottom: 1px solid #a0a0a0;
  box-shadow: 0 1px #fff;
}
.app {
  width: 15px;
  height: 16px;
}
.menus {
  display: flex;
  gap: 18px;
  flex: 1;
  padding: 0 0 2px 9px;
}
.window-buttons {
  display: flex;
  gap: 1px;
}
.window-buttons button {
  display: grid;
  place-items: center;
  width: 18px;
  height: 18px;
  border: 1px solid #e2e2de;
  background: #fcfcfa;
}
.window-buttons svg {
  width: 16px;
  height: 16px;
}
.toolbar {
  display: flex;
  flex: none;
  height: 27px;
  padding-top: 1px;
  box-sizing: border-box;
}
.toolbar.second {
  height: 26px;
  padding-top: 0;
}
.strip {
  display: flex;
  align-items: stretch;
  border-right: 1px solid #a0a0a0;
  padding-right: 2px;
  box-shadow: 1px 0 #fff;
}
.strip + .strip {
  padding-left: 3px;
}
.strip.framed {
  border-bottom: 1px solid #a0a0a0;
  box-shadow: 1px 1px #fff;
}
.grip {
  width: 3px;
  margin: 3px 2px 3px 0;
  background: repeating-linear-gradient(#a0a0a0 0 1px, #f0f0ee 1px 2px);
}
.second .grip {
  margin-right: 0;
}
.group {
  display: flex;
}
.group + .group {
  margin-left: 2px;
  padding-left: 2px;
  border-left: 1px solid #a0a0a0;
}
.tool {
  display: flex;
  align-items: center;
  justify-content: center;
  width: 28px;
  box-sizing: border-box;
}
.tool.active {
  border: 1px solid #fff;
  border-top-color: #a0a0a0;
  border-left-color: #a0a0a0;
  background: #f8f8f7;
}
.tool.wide {
  width: 37px;
  gap: 3px;
}
.group:first-of-type .tool.wide {
  justify-content: flex-start;
  padding-left: 2px;
}
.tool.labelled {
  width: auto;
  gap: 2px;
  padding: 0 6px;
}
.tool.period {
  font-size: 9px;
  color: #444;
}
.icon {
  width: 18px;
  height: 18px;
  flex: none;
}
.icon.chat {
  width: 22px;
}
.caret {
  border: 3px solid transparent;
  border-top-color: #000;
  border-bottom: 0;
}
.corner {
  display: flex;
  align-items: center;
  gap: 10px;
  margin-left: auto;
  padding-right: 6px;
}
.corner button {
  display: flex;
}

.chart {
  display: grid;
  grid-template: minmax(0, 1fr) 71px 20px / minmax(0, 1fr) 50px;
  row-gap: 1px;
  flex: 1;
  min-height: 0;
  margin-right: 2px;
  padding: 2px 0 0 1px;
  border-top: 2px solid #696969;
  background: #000;
  color: #fff;
  font-size: 9px;
  line-height: 14px;
}
.pane {
  position: relative;
  min-height: 0;
  border: 1px solid #fff;
  overflow: hidden;
}
.plot {
  display: block;
  width: 100%;
  height: 100%;
}
.bid {
  stroke: #303030;
  shape-rendering: crispEdges;
}
.crisp path {
  fill: none;
  shape-rendering: crispEdges;
}
.bar.up {
  stroke: #00781a;
}
.bar.down {
  stroke: #c80000;
}
.bar.fresh {
  stroke: #00ff32;
}
.level {
  stroke: #00c04a;
}
.h4 {
  stroke-width: 4px;
  stroke-linejoin: round;
}
.h4.high {
  stroke: #be0000;
}
.h4.low {
  stroke: #05801c;
}
.h1 {
  stroke-width: 2px;
}
.h1.high {
  stroke: #f00;
}
.h1.low {
  stroke: #00cd50;
}
.m15.high {
  stroke: #ffa500;
}
.m15.low {
  stroke: #00ff32;
}
.outer,
.inner {
  fill: none;
}
.highs .outer {
  stroke: #b80000;
  stroke-width: 2px;
}
.highs .inner {
  stroke: #e80000;
}
.highs .dot {
  fill: #ffa01e;
}
.lows .outer {
  stroke: #087a1e;
  stroke-width: 2px;
}
.lows .inner {
  stroke: #00a844;
}
.lows .dot {
  fill: #00f032;
}
.pattern text {
  fill: #0ff;
}
.pattern path {
  fill: none;
  stroke: #00a8c8;
}
.pattern.blue text {
  fill: #1e90ff;
}
.pattern.blue path {
  stroke: #1668c0;
}
.pattern text,
.title,
.timer,
.price {
  font-family: 'Liberation Sans', Arial, sans-serif;
  font-size: 13px;
}
.quote {
  fill: #fff;
}
.title {
  fill: #cf0;
}
.timer {
  font-size: 27px;
  fill: #00cd50;
}
.price {
  font-size: 53px;
  text-anchor: end;
  fill: #fff;
}
.switches {
  position: absolute;
  left: 1px;
  bottom: 0;
  font: 12px/18px 'Liberation Sans', Arial, sans-serif;
}
.switches div {
  display: flex;
  gap: 2px;
  margin-top: 2px;
}
.switches button {
  width: 58px;
  height: 18px;
  background: #696969;
  color: #fff;
}
.scale {
  position: relative;
  display: flex;
  flex-direction: column;
  justify-content: space-between;
  margin: -1px 0 -4px;
}
.scale li {
  display: flex;
  align-items: center;
  gap: 2px;
  height: 14px;
}
.scale li::before {
  content: '';
  width: 3px;
  height: 1px;
  background: #fff;
}
.scale .current {
  position: absolute;
  top: 188px;
  left: 1px;
  right: 2px;
  height: 11px;
  padding-left: 4px;
  background: #fff;
  color: #000;
}
.scale .current::before {
  display: none;
}
.subscale {
  display: flex;
  flex-direction: column;
  justify-content: space-between;
  padding-left: 4px;
}
.indicator h2 {
  margin: 2px 0 0 4px;
  font-size: 10px;
  line-height: 14px;
  font-weight: 400;
}
.panels {
  display: flex;
  gap: 17px;
  padding-left: 1px;
  font-family: 'Liberation Sans', Arial, sans-serif;
}
.panel h3 {
  margin: 0;
  font-size: 10px;
  line-height: 13px;
  font-weight: 400;
  text-align: center;
  color: #cf0;
}
.panel ul {
  display: grid;
  grid-template-columns: 19px 22px 23px 27px 18px 22px 18px 24px 20px;
}
.panel li {
  display: flex;
  flex-direction: column;
  align-items: center;
  color: #87ceeb;
}
.panel li svg {
  width: 14px;
  height: 14px;
  margin-top: 5px;
}
output {
  margin-left: -10px;
  font: italic 900 46px/52px Inter, 'Liberation Sans', sans-serif;
  color: #0f3;
}
.times {
  grid-column: 1 / -1;
  display: flex;
  margin-top: -1px;
  overflow: hidden;
}
.times li {
  position: relative;
  flex: 0 0 64px;
  padding-top: 2px;
  white-space: nowrap;
}
.times li::before {
  content: '';
  position: absolute;
  top: 0;
  left: 1px;
  width: 1px;
  height: 3px;
  background: #fff;
}
footer {
  display: flex;
  flex: none;
  height: 1px;
  margin-top: 2px;
  background: #000;
}
footer span {
  width: 90px;
  margin-left: 684px;
  background: #f0f0ee;
}
</style>
